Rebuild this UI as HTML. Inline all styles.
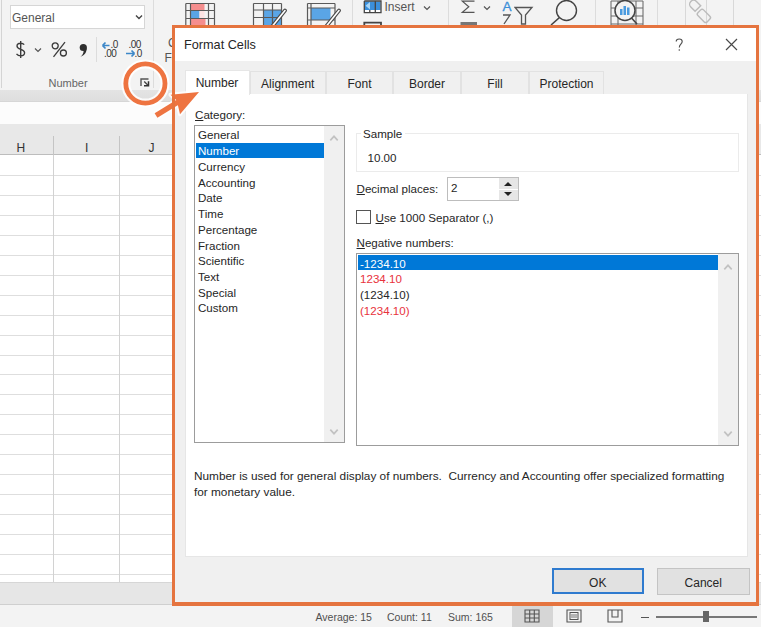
<!DOCTYPE html>
<html><head><meta charset="utf-8">
<style>
html,body{margin:0;padding:0;}
body{width:761px;height:627px;overflow:hidden;position:relative;background:#f3f3f3;font-family:"Liberation Sans",sans-serif;color:#262626;}
.a{position:absolute;}
.t{position:absolute;white-space:pre;line-height:1;}
#ribbon{left:0;top:0;width:761px;height:91px;background:#f3f3f3;}
#shadow{left:0;top:90px;width:761px;height:12px;background:linear-gradient(#e4e4e4,#dedede);border-bottom:1px solid #d6d6d6;box-sizing:border-box;}
#fbar{left:0;top:102px;width:761px;height:22.5px;background:#fcfcfc;}
#colhdr{left:0;top:124px;width:761px;height:31px;background:#e8e8e8;border-bottom:1px solid #bdbdbd;box-sizing:border-box;}
#grid{left:0;top:155px;width:761px;height:427px;background:#fff;}
#hscroll{left:0;top:582px;width:761px;height:23px;background:#e6e6e6;border-top:1px solid #d6d6d6;border-bottom:1px solid #cfcfcf;box-sizing:border-box;}
#status{left:0;top:605px;width:761px;height:22px;background:#f3f3f3;}
.st{font-size:10.5px;color:#505050;}
/* dialog */
#dlg{left:172px;top:25px;width:587px;height:580px;border:3px solid #e5743f;box-sizing:border-box;background:#f0f0f0;}
#title{left:0;top:0;width:581px;height:33px;background:#fff;}
.tab{position:absolute;top:70.5px;height:23.5px;background:#f0f0f0;border:1px solid #e2e2e2;border-bottom:none;box-sizing:border-box;font-size:12px;text-align:center;color:#262626;}
.tab span{position:absolute;left:0;right:0;top:6px;line-height:1;}
#panel{left:184.5px;top:94px;width:563px;height:463px;background:#fff;border:1px solid #e6e6e6;border-top:none;box-sizing:border-box;}
.dt{font-size:11.6px;color:#262626;}
.list{position:absolute;border:1px solid #9c9c9c;box-sizing:border-box;background:#fff;}
.sb{position:absolute;background:#f0f0f0;}
.btn{position:absolute;top:568px;height:26.5px;background:#e1e1e1;border:1px solid #c4c4c4;box-sizing:border-box;font-size:12px;text-align:center;color:#262626;}
.btn span{position:absolute;left:0;right:0;top:7.5px;line-height:1;}
u{text-decoration:underline;text-underline-offset:1px;}
</style></head>
<body>
<!-- ribbon -->
<div class="a" id="ribbon"></div>
<div class="a" style="left:1px;top:0;width:1px;height:88px;background:#d4d4d4"></div>
<div class="a" style="left:10px;top:4.5px;width:135px;height:24.5px;background:#fff;border:1px solid #d6d6d6;box-sizing:border-box"></div>
<div class="t" style="left:12px;top:12.1px;font-size:12px;color:#555">General</div>
<svg class="a" style="left:135px;top:14px" width="8" height="6"><path d="M1 1.5 L4 4.5 L7 1.5" fill="none" stroke="#444" stroke-width="1.4"/></svg>
<svg class="a" style="left:14px;top:40px" width="14" height="19"><path d="M10.2 4.6 C9.4 3.6 8.3 3.2 6.6 3.2 C4.5 3.2 3 4.3 3 6.1 C3 10.2 10.6 8.6 10.6 12.8 C10.6 14.8 8.9 15.8 6.7 15.8 C4.8 15.8 3.5 15.1 2.5 13.8 M6.7 1 V18" fill="none" stroke="#3a3a3a" stroke-width="1.35"/></svg>
<svg class="a" style="left:34px;top:47px" width="8" height="6"><path d="M1 1.5 L4 4.5 L7 1.5" fill="none" stroke="#555" stroke-width="1.2"/></svg>
<svg class="a" style="left:50px;top:40px" width="19" height="19"><circle cx="5.2" cy="5.8" r="3" fill="none" stroke="#3a3a3a" stroke-width="1.3"/><circle cx="13.4" cy="13" r="3" fill="none" stroke="#3a3a3a" stroke-width="1.3"/><path d="M15 2.2 L3.5 16.8" stroke="#3a3a3a" stroke-width="1.3"/></svg>
<svg class="a" style="left:77px;top:42px" width="12" height="16"><circle cx="6.3" cy="5.5" r="3.6" fill="#2e2e2e"/><path d="M9.6 6 C9.9 10 8 13.2 3.5 14.8 C5.6 13 6.6 11.2 6.6 9 Z" fill="#2e2e2e"/></svg>
<div class="a" style="left:96px;top:37px;width:1px;height:25px;background:#dcdcdc"></div>
<!-- increase decimal -->
<svg class="a" style="left:100px;top:39px" width="22" height="19">
<path d="M2.5 6.5 H9.5 M2.5 6.5 L5.5 3.5 M2.5 6.5 L5.5 9.5" stroke="#3c87c8" stroke-width="1.7" fill="none"/>
<text x="10.5" y="8.8" font-size="10" fill="#333" font-family="Liberation Sans" letter-spacing="-0.6">.0</text>
<text x="4" y="17.6" font-size="10" fill="#333" font-family="Liberation Sans" letter-spacing="-0.6">.00</text>
</svg>
<svg class="a" style="left:124px;top:39px" width="22" height="19">
<text x="4.5" y="8.8" font-size="10" fill="#333" font-family="Liberation Sans" letter-spacing="-0.6">.00</text>
<path d="M2 14.5 H10.5 M10.5 14.5 L7.5 11.5 M10.5 14.5 L7.5 17.5" stroke="#3c87c8" stroke-width="1.7" fill="none"/>
<text x="10.5" y="17.6" font-size="10" fill="#333" font-family="Liberation Sans" letter-spacing="-0.6">.0</text>
</svg>
<div class="t" style="left:48.5px;top:77.5px;font-size:11px;color:#666">Number</div>
<svg class="a" style="left:139px;top:77px" width="12" height="11"><path d="M2 9 V2 H9.5" stroke="#555" stroke-width="1.4" fill="none"/><path d="M5.2 4.5 L9 8.2" stroke="#444" stroke-width="1.3"/><path d="M9.5 4.2 V8.8 H5" stroke="#333" stroke-width="1.5" fill="none"/></svg>
<div class="a" style="left:153px;top:0;width:1px;height:88px;background:#dcdcdc"></div>
<div class="t" style="left:168px;top:37px;font-size:12px;color:#555">C</div>
<div class="t" style="left:164.5px;top:51.5px;font-size:12px;color:#555">Fo</div>

<!-- top icons -->
<svg class="a" style="left:184px;top:2px" width="34" height="24">
<rect x="6.5" y="1.5" width="14" height="7" fill="#f58e8e"/>
<rect x="6.5" y="8.5" width="9" height="8" fill="#5aa5e6"/>
<rect x="15.5" y="8.5" width="5" height="8" fill="#fde3e3"/>
<rect x="6.5" y="16.5" width="15" height="8" fill="#f58e8e"/>
<path d="M1.8 1.5 H30.5 M1.8 8.5 H30.5 M1.8 16.5 H30.5 M1.8 1.5 V25 M6.5 1.5 V25 M24.5 1.5 V25 M30.5 1.5 V25" stroke="#5a5a5a" stroke-width="1.2" fill="none"/>
</svg>
<svg class="a" style="left:252px;top:2px" width="36" height="24">
<rect x="11.5" y="8" width="18.5" height="17" fill="#5aa5e6"/>
<path d="M1.5 1.5 H29.5 M1.5 8 H29.5 M1.5 15.5 H29.5 M1.5 1.5 V25 M11.5 1.5 V25 M20.5 1.5 V25 M29.5 1.5 V25" stroke="#5a5a5a" stroke-width="1.2" fill="none"/>
<path d="M33 8.5 L20.5 24" stroke="#4a4a4a" stroke-width="3.8" stroke-linecap="round"/>
<path d="M33 8.5 L20.5 24" stroke="#fff" stroke-width="1.6" stroke-linecap="round"/>
</svg>
<svg class="a" style="left:306px;top:2px" width="36" height="24">
<rect x="5" y="6" width="19.5" height="12" fill="#5aa5e6"/>
<path d="M1.5 1.5 H29 M1.5 6 H29 M1.5 18 H29 M1.5 1.5 V25 M5 1.5 V25 M29 1.5 V25" stroke="#5a5a5a" stroke-width="1.2" fill="none"/>
<path d="M33 8.5 L20.5 24" stroke="#4a4a4a" stroke-width="3.8" stroke-linecap="round"/>
<path d="M33 8.5 L20.5 24" stroke="#fff" stroke-width="1.6" stroke-linecap="round"/>
</svg>
<div class="a" style="left:352px;top:0;width:1px;height:25px;background:#dcdcdc"></div>
<svg class="a" style="left:363px;top:0px" width="20" height="25">
<rect x="1.5" y="1.5" width="16" height="8.5" fill="#3b8fdc"/>
<path d="M2.5 5.8 L7 2 V9.6 Z" fill="#a8d6f7"/>
<rect x="2" y="10" width="15.5" height="2" fill="#fff"/>
<path d="M1.3 1 V12.6 H18 V1 H1.3 M12.3 1 V12.6 M6.8 10 V12.6" stroke="#444" stroke-width="1.3" fill="none"/>
<path d="M1.3 25 V22.6 H18 V25" stroke="#444" stroke-width="1.8" fill="none"/>
</svg>
<div class="t" style="left:384.5px;top:1.3px;font-size:12px;color:#555">Insert</div>
<svg class="a" style="left:423px;top:5px" width="8" height="6"><path d="M1 1.5 L4 4.5 L7 1.5" fill="none" stroke="#555" stroke-width="1.2"/></svg>
<div class="a" style="left:448px;top:0;width:1px;height:25px;background:#dcdcdc"></div>
<svg class="a" style="left:460px;top:0px" width="18" height="25"><path d="M14.5 1.2 H2.3 L8.8 6.8 L2.3 12.4 H14.5" fill="none" stroke="#555" stroke-width="1.2"/><rect x="0.5" y="22" width="16.5" height="3" fill="#777"/></svg>
<svg class="a" style="left:483px;top:5px" width="8" height="6"><path d="M1 1.5 L4 4.5 L7 1.5" fill="none" stroke="#555" stroke-width="1.2"/></svg>
<div class="t" style="left:502.5px;top:0px;font-size:13.5px;color:#3c8fd8;-webkit-text-stroke:0.3px #3c8fd8">A</div>
<svg class="a" style="left:500px;top:14px" width="12" height="11"><path d="M3 1 H10 L4 10" fill="none" stroke="#555" stroke-width="1.3"/></svg>
<svg class="a" style="left:514px;top:6px" width="20" height="19"><path d="M1 1.5 H18 L11.5 9 V18 H7.5 V9 Z" fill="none" stroke="#555" stroke-width="1.3"/></svg>
<svg class="a" style="left:548px;top:0px" width="32" height="25"><circle cx="18.5" cy="10.5" r="10" fill="none" stroke="#444" stroke-width="1.4"/><path d="M11.5 17.5 L3 25" stroke="#444" stroke-width="1.6"/></svg>
<div class="a" style="left:595px;top:0;width:1px;height:25px;background:#dcdcdc"></div>
<svg class="a" style="left:609px;top:0px" width="36" height="25">
<path d="M2 1 V25 M34 1 V25 M2 1 H34 M2 8 H34 M2 16 H34 M2 24 H34 M9 1 V25 M27 1 V25" stroke="#6a6a6a" stroke-width="1.05" fill="none"/>
<circle cx="16" cy="10.5" r="10" fill="#f3f3f3" stroke="#444" stroke-width="1.5"/>
<rect x="11" y="9" width="2.5" height="6" fill="#4a9be0"/><rect x="14.5" y="6" width="2.5" height="9" fill="#4a9be0"/><rect x="18" y="7.5" width="2.5" height="7.5" fill="#4a9be0"/>
<path d="M22.5 18 L28 24" stroke="#444" stroke-width="1.6"/>
</svg>
<div class="a" style="left:656.5px;top:0;width:1px;height:25px;background:#dcdcdc"></div>
<div class="a" style="left:684.5px;top:0;width:1px;height:25px;background:#d8d8d8"></div>
<div class="a" style="left:705.5px;top:0;width:1px;height:25px;background:#d8d8d8"></div>
<div class="a" style="left:732.5px;top:0;width:1px;height:25px;background:#d8d8d8"></div>
<svg class="a" style="left:687px;top:0px" width="26" height="25"><g transform="rotate(-45 13 12)" fill="none" stroke="#bbb" stroke-width="1.4"><rect x="9" y="11" width="8" height="13" rx="2"/><path d="M10 2 a4 4 0 0 1 8 0 V8 H10 Z"/></g></svg>

<!-- sheet -->
<div class="a" id="shadow"></div>
<div class="a" id="fbar"></div>
<div class="a" id="colhdr"></div>
<div class="a" style="left:53px;top:136px;width:1px;height:19px;background:#c4c4c4"></div>
<div class="a" style="left:119px;top:136px;width:1px;height:19px;background:#c4c4c4"></div>
<div class="t" style="left:16.5px;top:142.3px;font-size:12px;color:#333">H</div>
<div class="t" style="left:85px;top:142.3px;font-size:12px;color:#333">I</div>
<div class="t" style="left:148.5px;top:142.3px;font-size:12px;color:#333">J</div>
<div class="a" id="grid"></div>

<div class="a" style="left:0;top:175px;width:761px;height:1px;background:#dedede"></div><div class="a" style="left:0;top:195px;width:761px;height:1px;background:#dedede"></div><div class="a" style="left:0;top:215px;width:761px;height:1px;background:#dedede"></div><div class="a" style="left:0;top:235px;width:761px;height:1px;background:#dedede"></div><div class="a" style="left:0;top:255px;width:761px;height:1px;background:#dedede"></div><div class="a" style="left:0;top:275px;width:761px;height:1px;background:#dedede"></div><div class="a" style="left:0;top:295px;width:761px;height:1px;background:#dedede"></div><div class="a" style="left:0;top:315px;width:761px;height:1px;background:#dedede"></div><div class="a" style="left:0;top:335px;width:761px;height:1px;background:#dedede"></div><div class="a" style="left:0;top:355px;width:761px;height:1px;background:#dedede"></div><div class="a" style="left:0;top:374px;width:761px;height:1px;background:#dedede"></div><div class="a" style="left:0;top:394px;width:761px;height:1px;background:#dedede"></div><div class="a" style="left:0;top:414px;width:761px;height:1px;background:#dedede"></div><div class="a" style="left:0;top:434px;width:761px;height:1px;background:#dedede"></div><div class="a" style="left:0;top:454px;width:761px;height:1px;background:#dedede"></div><div class="a" style="left:0;top:474px;width:761px;height:1px;background:#dedede"></div><div class="a" style="left:0;top:494px;width:761px;height:1px;background:#dedede"></div><div class="a" style="left:0;top:514px;width:761px;height:1px;background:#dedede"></div><div class="a" style="left:0;top:534px;width:761px;height:1px;background:#dedede"></div><div class="a" style="left:0;top:554px;width:761px;height:1px;background:#dedede"></div><div class="a" style="left:0;top:574px;width:761px;height:1px;background:#dedede"></div>
<div class="a" style="left:53px;top:155px;width:1px;height:427px;background:#d2d2d2"></div>
<div class="a" style="left:119px;top:155px;width:1px;height:427px;background:#d2d2d2"></div>
<div class="a" id="hscroll"></div>
<div class="a" id="status"></div>
<div class="t st" style="left:315.5px;top:612px">Average: 15</div>
<div class="t st" style="left:387px;top:612px">Count: 11</div>
<div class="t st" style="left:448px;top:612px">Sum: 165</div>
<div class="a" style="left:512px;top:606px;width:41px;height:21px;background:#d6d6d6"></div>
<svg class="a" style="left:524px;top:609px" width="16" height="14"><path d="M1 1 H15 V13 H1 Z M1 5 H15 M1 9 H15 M5.7 1 V13 M10.3 1 V13" fill="none" stroke="#555" stroke-width="1.1"/></svg>
<svg class="a" style="left:566px;top:609px" width="16" height="14"><path d="M1 1 H15 V13 H1 Z" fill="none" stroke="#555" stroke-width="1.1"/><rect x="4" y="3.5" width="8" height="7" fill="none" stroke="#555" stroke-width="1"/><path d="M5 6 H11 M5 8 H11" stroke="#555" stroke-width="0.8"/></svg>
<svg class="a" style="left:607px;top:609px" width="16" height="14"><path d="M1 1 H15 V13 H1 Z" fill="none" stroke="#555" stroke-width="1.1"/><path d="M5 1 V8 H11 V1" fill="none" stroke="#555" stroke-width="1.1"/></svg>
<div class="a" style="left:641px;top:616.5px;width:8px;height:1px;background:#555"></div>
<div class="a" style="left:656px;top:616px;width:101px;height:1.5px;background:#777"></div>
<div class="a" style="left:703px;top:611px;width:6px;height:11px;background:#666"></div>

<!-- dialog -->
<div class="a" id="dlg"><div class="a" id="title"></div></div>
<div class="t" style="left:184px;top:38.5px;font-size:12.7px;color:#262626">Format Cells</div>
<svg class="a" style="left:673px;top:36.7px" width="12" height="16"><path d="M3.2 4.6 C3.2 2.9 4.6 2 6.2 2 C7.9 2 9.2 3 9.2 4.6 C9.2 7.2 6.3 7.3 6.3 10.4" fill="none" stroke="#505050" stroke-width="1.15"/><circle cx="6.3" cy="13" r="0.8" fill="#505050"/></svg>
<svg class="a" style="left:725px;top:37.5px" width="13" height="13"><path d="M1 1 L12 12 M12 1 L1 12" stroke="#4a4a4a" stroke-width="1.15"/></svg>
<div class="tab" style="left:249.5px;width:76.5px"><span>Alignment</span></div>
<div class="tab" style="left:326px;width:67px"><span>Font</span></div>
<div class="tab" style="left:393px;width:68px"><span>Border</span></div>
<div class="tab" style="left:461px;width:68px"><span>Fill</span></div>
<div class="tab" style="left:529px;width:75px"><span>Protection</span></div>
<div class="a" id="panel"></div>
<div class="tab" style="left:184.5px;width:65px;top:69.5px;height:25px;background:#fff;border-color:#e6e6e6"><span style="top:6.5px">Number</span></div>

<div class="t dt" style="left:195px;top:109.2px"><u>C</u>ategory:</div>
<div class="list" style="left:194px;top:125px;width:151px;height:318px">
  <div class="sb" style="left:129px;top:0;width:20px;height:316px"></div>
</div>
<svg class="a" style="left:328.5px;top:134px" width="11" height="8"><path d="M1.3 6.3 L5 2.3 L8.7 6.3" fill="none" stroke="#c2c2c2" stroke-width="1.7"/></svg>
<svg class="a" style="left:328.5px;top:428px" width="11" height="8"><path d="M1.3 1.7 L5 5.7 L8.7 1.7" fill="none" stroke="#c2c2c2" stroke-width="1.7"/></svg>
<div class="a" style="left:196px;top:143px;width:127.5px;height:14.5px;background:#0078d7"></div>
<div class="t dt" style="left:198px;top:129.4px">General</div>
<div class="t dt" style="left:198px;top:145.1px;color:#fff">Number</div>
<div class="t dt" style="left:198px;top:160.8px">Currency</div>
<div class="t dt" style="left:198px;top:176.6px">Accounting</div>
<div class="t dt" style="left:198px;top:192.3px">Date</div>
<div class="t dt" style="left:198px;top:208.0px">Time</div>
<div class="t dt" style="left:198px;top:223.8px">Percentage</div>
<div class="t dt" style="left:198px;top:239.5px">Fraction</div>
<div class="t dt" style="left:198px;top:255.2px">Scientific</div>
<div class="t dt" style="left:198px;top:271.0px">Text</div>
<div class="t dt" style="left:198px;top:286.7px">Special</div>
<div class="t dt" style="left:198px;top:302.4px">Custom</div>

<div class="a" style="left:356px;top:132.5px;width:382.5px;height:39.5px;border:1px solid #ebebeb;box-sizing:border-box"></div>
<div class="a" style="left:361px;top:127px;width:44px;height:12px;background:#fff"></div>
<div class="t dt" style="left:363px;top:127.7px">Sample</div>
<div class="t dt" style="left:367.5px;top:152.2px">10.00</div>
<div class="t dt" style="left:356.5px;top:182.8px"><u>D</u>ecimal places:</div>
<div class="a" style="left:447px;top:177px;width:72px;height:24px;border:1px solid #bdbdbd;box-sizing:border-box;background:#fff"></div>
<div class="a" style="left:498.5px;top:178px;width:19px;height:22px;background:#e6e6e6"></div>
<div class="a" style="left:498.5px;top:188.5px;width:19px;height:1px;background:#fff"></div>
<svg class="a" style="left:502px;top:180px" width="12" height="18"><path d="M2 6 L6 2 L10 6 Z M2 12 L10 12 L6 16 Z" fill="#222"/></svg>
<div class="t dt" style="left:451px;top:182px">2</div>
<div class="a" style="left:356px;top:209.5px;width:14.5px;height:14.5px;border:1px solid #555;box-sizing:border-box;background:#fff"></div>
<div class="t dt" style="left:375.5px;top:212.2px"><u>U</u>se 1000 Separator (,)</div>
<div class="t dt" style="left:356.5px;top:236.5px"><u>N</u>egative numbers:</div>
<div class="list" style="left:356px;top:252.5px;width:383px;height:193px">
  <div class="sb" style="left:361px;top:0;width:20px;height:191px"></div>
</div>
<svg class="a" style="left:723px;top:263px" width="11" height="8"><path d="M1.3 6.3 L5 2.3 L8.7 6.3" fill="none" stroke="#c2c2c2" stroke-width="1.7"/></svg>
<svg class="a" style="left:723px;top:429.5px" width="11" height="8"><path d="M1.3 1.7 L5 5.7 L8.7 1.7" fill="none" stroke="#c2c2c2" stroke-width="1.7"/></svg>
<div class="a" style="left:357.5px;top:255px;width:360px;height:15px;background:#0078d7"></div>
<div class="t dt" style="left:360px;top:257.5px;color:#fff">-1234.10</div>
<div class="t dt" style="left:360px;top:273.2px;color:#e8323c">1234.10</div>
<div class="t dt" style="left:360px;top:289px">(1234.10)</div>
<div class="t dt" style="left:360px;top:304.7px;color:#e8323c">(1234.10)</div>

<div class="t dt" style="left:194px;top:470.6px;font-size:11.8px">Number is used for general display of numbers.  Currency and Accounting offer specialized formatting</div>
<div class="t dt" style="left:194px;top:486.6px;font-size:11.8px">for monetary value.</div>

<div class="btn" style="left:551.5px;width:92.5px;height:26px;border:2px solid #2f7bcf"><span style="top:6.5px">OK</span></div>
<div class="btn" style="left:656.5px;width:93.5px"><span>Cancel</span></div>

<!-- annotation -->
<svg class="a" style="left:0;top:0" width="761" height="627">
<circle cx="145.4" cy="83.5" r="19.6" fill="none" stroke="#fff" stroke-width="9" opacity="0.85"/>
<path d="M156 115.5 L178 102" stroke="#fff" stroke-width="9" opacity="0.85"/>
<path d="M199 92 L170.5 94.7 L176.8 100.5 L180 114.2 Z" fill="#fff" stroke="#fff" stroke-width="4" stroke-linejoin="round" opacity="0.85"/>
<circle cx="145.4" cy="83.5" r="19.6" fill="none" stroke="#ee7441" stroke-width="4.8"/>
<path d="M156 115.5 L178 102" stroke="#ee7441" stroke-width="5.3"/>
<path d="M199 92 L170.5 94.7 L176.8 100.5 L180 114.2 Z" fill="#ee7441"/>
</svg>
<div class="a" style="left:172px;top:25px;width:587px;height:580.5px;border:3px solid #e5743f;box-sizing:border-box"></div>
</body></html>
